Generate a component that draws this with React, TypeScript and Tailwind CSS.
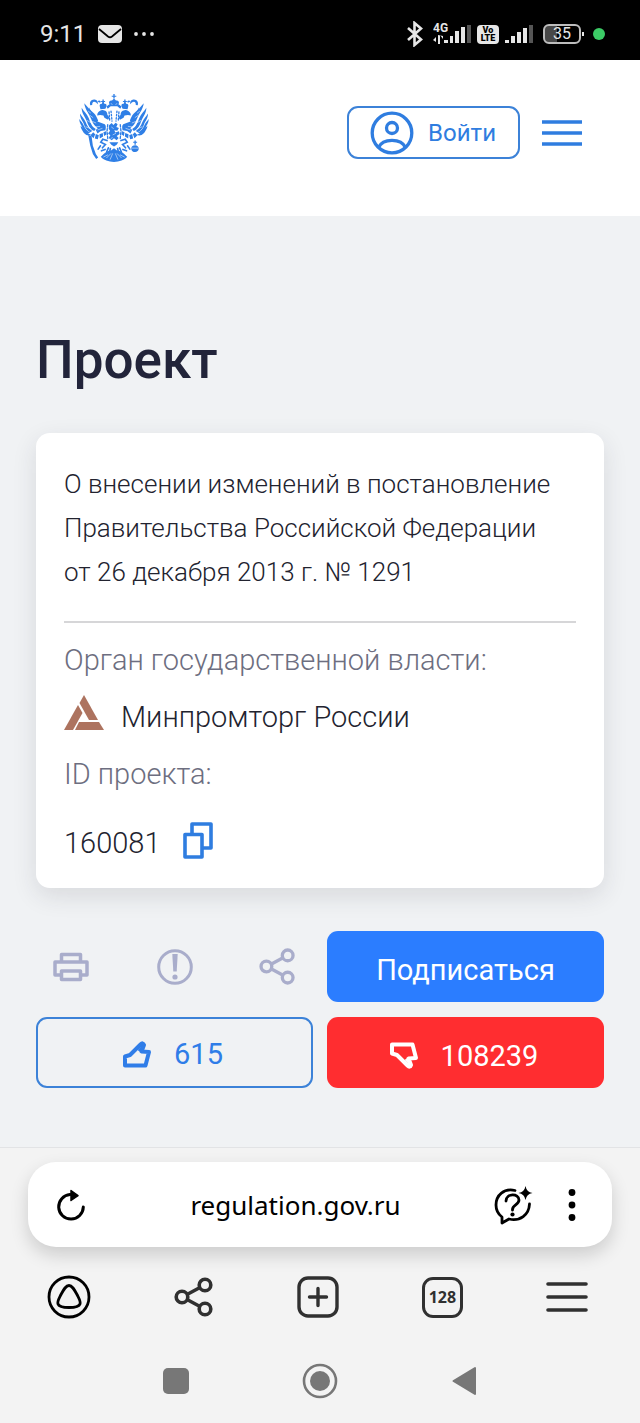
import type { ReactNode } from 'react';

function EagleHalf() {
  return (
    <g>
      {/* wing feathers */}
      <g fill="currentColor">
        <path d="M72 70c8 10 20 22 27 34 8 14 10 27 22 34l-5 9c-15-7-19-20-25-33C85 99 74 88 72 70z" />
        <path d="M64 84c6 10 16 18 21 30 6 14 9 27 22 34l-5 6c-14-6-18-18-23-31-5-12-15-22-15-39z" />
        <path d="M59 101c6 9 13 16 17 26 5 12 9 20 20 27l-6 4c-11-5-16-14-19-24-4-11-12-18-12-33z" />
        <path d="M57 118c5 7 11 12 14 21 4 9 9 15 19 20l-7 3c-10-4-14-10-17-18-3-9-9-13-9-26z" />
        <path d="M61 138c5 5 9 8 13 14 4 7 11 11 20 14l-9 2c-10-2-15-8-18-14-3-6-6-9-6-16z" />
        <path d="M86 82c-1 8 4 16 10 23s9 15 14 22l4-5c-4-8-6-15-12-21-7-7-12-10-16-19z" />
        <path d="M98 109c7 6 12 9 14 16l22 9c4 4 4 10 2 18l-14 2-10 8-5-11 7-7-8-12z" />
        <path d="M91 167l8-9 6 6-5 12zM104 177l3-14 9 4-3 12zM119 177l-1-13 10-4 1 11zM132 169l-2-11 9-4v11z" />
      </g>
      <g fill="none" stroke="white" strokeWidth="1.6">
        <path d="M88 106l11 8M80 122l14 8M76 141l16 6M96 125l12 5M104 142l16-2M112 151l15-5M84 94l8 6" />
      </g>
      {/* head, neck and ribbon */}
      <g fill="currentColor">
        <path d="M112 101c4-7 10-11 18-10 9 1 12 7 12 14l6 8-4 7-11-6-3-7-10-1-9 1z" />
        <path d="M121 88l-2-8c-2-5 2-9 6-8l2-5h4l2 5c5-1 8 3 6 8l-3 7z" />
        <path d="M127 59h4v4h4v3h-4v4h-4v-4h-4v-3h4z" />
        <path d="M90 76c-3-9 3-18 13-17 8 1 11 7 10 14l-5-5c-7-6-13-2-12 7z" />
        <path d="M112 64c5-5 10-2 10 3l-5 1zM139 80c5-4 7-7 12-7v7l-8 7z" />
      </g>
      {/* body scales, leg and claw */}
      <g fill="none" stroke="currentColor" strokeLinecap="round">
        <path d="M147 96l2 27" strokeWidth="4" strokeDasharray="5 5" />
        <path d="M153 94l3 30" strokeWidth="4" strokeDasharray="4 6" />
        <path d="M143 135l-2 19 2 23" strokeWidth="4" strokeDasharray="7 5" />
        <path d="M141 183l-13-4-6 9 14 7-9 10M121 199l-7 10M135 210l-11 4" strokeWidth="5" />
        <path d="M145 205l-5 12M151 207l-3 14" strokeWidth="5" />
      </g>
    </g>
  );
}

function Eagle() {
  return (
    <svg viewBox="56 40 212 210" className="h-[70px] w-[70px] text-[#2f7fe6]" role="img" aria-label="Герб">
      <EagleHalf />
      <g transform="translate(324 0) scale(-1 1)">
        <EagleHalf />
      </g>
      <g fill="currentColor">
        {/* main crown */}
        <path d="M160 42h4v5h5v3h-5v6h-4v-6h-5v-3h5z" />
        <path d="M150 79l-3-10c-1-6 5-9 9-7l6-6 6 6c4-2 10 1 9 7l-3 10z" />
        {/* rider on the shield */}
        <path d="M147 137l8-7 5 6 7-7 6 5-4 8 8 3-5 8-9-1 3 7 11-4 2 8-9 6 6 6-6 7-8-6-7 6-9-7 5-8-7-5 6-9-4-6z" />
        <path d="M148 188h27l-5 8-8 5-8-5z" />
        {/* tail */}
        <path d="M122 232c7-6 16-18 31-19l9-7 9 7c15 1 24 13 31 19-8 10-24 14-40 16-16-2-32-6-40-16z" />
        {/* sceptre */}
        <path d="M84 166l10 3 4 30 9 25 7 10-6 5-10-15-8-26z" />
        {/* orb */}
        <path d="M214 207c1-7 6-10 12-10s11 4 11 10-5 11-11 11-12-4-12-11zM224 183h4v4h4v3h-4v6h-4v-6h-4v-3h4z" />
      </g>
      <g fill="none" stroke="white" strokeWidth="1.6">
        <path d="M153 70l4 5M171 70l-4 5M154 142l7 5M158 166l10-5M152 177l6-3M139 236l14-14M150 241l8-19M174 241l-8-19M185 236l-14-14M130 233l14-7M194 233l-14-7M215 206h21" />
      </g>
    </svg>
  );
}

function StatusBar() {
  return (
    <div className="flex h-[60px] items-center justify-between bg-black pt-2 pr-[35px] pl-10 text-[#e6e6e6]">
      <div className="flex items-center gap-3">
        <span className="text-2xl leading-8">9:11</span>
        <svg viewBox="0 0 24 18" className="h-[18px] w-6">
          <rect width="24" height="18" rx="4" fill="currentColor" />
          <path d="M1 4l9 7.5q2 1.500 4 0L23 4" fill="none" stroke="black" strokeWidth="1.800" />
        </svg>
        <svg viewBox="0 0 20 4" className="h-1 w-5" fill="currentColor">
          <circle cx="2" cy="2" r="1.900" />
          <circle cx="10" cy="2" r="1.900" />
          <circle cx="18" cy="2" r="1.900" />
        </svg>
      </div>
      <div className="flex items-center gap-[6px]">
        <svg viewBox="0 0 16 26" className="mr-1 h-[26px] w-4" fill="none" stroke="currentColor" strokeWidth="2.600">
          <path d="M1 7l13 11.500-6.500 5.500V2L14 7.500 1 19" />
        </svg>
        <svg viewBox="0 0 38 24" className="h-6 w-[38px]" fill="currentColor">
          <text x="0" y="10" fontSize="12" fontWeight="700" fontFamily="Roboto, sans-serif">4G</text>
          <path d="M0 18l3-3v5zM5 13v9h2v-9l3 4v-3zM11 18h4v3h-4zM17 14h3v7h-3zM22 9h4v12h-4zM28 5h4v16h-4z" />
          <path d="M34 3h4v18h-4z" fill="#555" />
        </svg>
        <span className="flex h-[19px] w-[22px] flex-col items-center justify-center rounded bg-[#e6e6e6] text-[9px] leading-[8px] font-black text-black">
          <span>Vo</span>
          <span>LTE</span>
        </span>
        <svg viewBox="0 0 28 20" className="h-5 w-7" fill="currentColor">
          <path d="M0 16h4v3H0zM6 12h4v7H6zM12 8h4v11h-4zM18 4h4v15h-4z" />
          <path d="M24 1h4v18h-4z" fill="#555" />
        </svg>
        <span className="ml-1 flex items-center gap-px">
          <span className="flex h-5 w-[38px] items-center justify-center rounded-md border-2 border-[#bdbdbd] bg-linear-to-r from-[#484848] from-35% to-black to-35% text-base leading-4">35</span>
          <span className="h-1 w-[2px] bg-[#e6e6e6]" />
        </span>
        <span className="ml-[3px] size-3 rounded-full bg-[#3ccb66]" />
      </div>
    </div>
  );
}

function ShareIcon({ className }: { className: string }) {
  return (
    <svg viewBox="0 0 40 40" className={className} fill="none" stroke="currentColor" strokeWidth="3.600">
      <circle cx="8" cy="20" r="5.800" />
      <circle cx="31" cy="8" r="5.800" />
      <circle cx="31" cy="32" r="5.800" />
      <path d="M13 17.500l13-7M13 22.500l13 7" />
    </svg>
  );
}

function Thumb({ className }: { className: string }) {
  return (
    <svg viewBox="0 0 30 30" className={className} fill="none" stroke="currentColor" strokeWidth="4" strokeLinejoin="round">
      <path d="M3 16.500L8 15 18.500 4.500Q21 2 22 5L19.500 11.500 27 12 23.500 25.500H3z" />
      <path d="M17 10l5-5-2 7z" fill="currentColor" strokeWidth="2" />
    </svg>
  );
}

function IconButton({ label, children }: { label: string; children: ReactNode }) {
  return (
    <button type="button" aria-label={label} className="flex items-center justify-center">
      {children}
    </button>
  );
}

function ProjectCard() {
  return (
    <section className="mt-[41px] rounded-[14px] bg-white px-7 pt-[29px] pb-[27px] text-[29px] leading-9 font-light text-[#22232f] shadow-[0_8px_24px_rgba(40,45,60,0.12)]">
      <p className="text-[26px] leading-[44px]">
        О внесении изменений в постановление
        <br />
        Правительства Российской Федерации
        <br />
        от 26 декабря 2013 г. № 1291
      </p>
      <hr className="mt-[27px] border-t-2 border-[#d6d6d8]" />
      <h2 className="mt-[19px] text-[#6d6e80]">Орган государственной власти:</h2>
      <div className="mt-[17px] flex items-start gap-[17px]">
        <svg viewBox="0 0 40 36" className="h-9 w-10 text-[#ad735f]" fill="currentColor">
          <path d="M20 0L34 25H25L15.500 8z" />
          <path d="M14 10L18.500 18 9 35H0z" />
          <path d="M15 27H35L40 35H11z" />
        </svg>
        <span className="pt-1">Минпромторг России</span>
      </div>
      <h2 className="mt-[21px] text-[#6d6e80]">ID проекта:</h2>
      <div className="mt-[30px] flex items-start gap-[22px]">
        <span className="pt-[3px]">160081</span>
        <IconButton label="Скопировать">
          <svg viewBox="0 0 30 37" className="h-[37px] w-[30px] text-[#2f7de0]" fill="none" stroke="currentColor" strokeWidth="3.600" strokeLinejoin="round">
            <path d="M9 12V2h19v24h-9" />
            <path d="M2 12.500h17V35H2z" />
          </svg>
        </IconButton>
      </div>
    </section>
  );
}

function Actions() {
  return (
    <div className="mt-[43px] grid grid-cols-2 gap-x-[14px] gap-y-[15px] text-[29px]">
      <div className="flex items-center justify-between pr-[17px] pl-4 text-[#a9adcb]">
        <IconButton label="Печать">
          <svg viewBox="0 0 38 30" className="h-[30px] w-[38px]" fill="none" stroke="currentColor" strokeWidth="3.500" strokeLinejoin="round">
            <path d="M9.500 10V2.500h19V10M9.500 23H3V10h32v13h-6.500" />
            <path d="M9.500 19h19v8.500h-19z" />
          </svg>
        </IconButton>
        <IconButton label="Сообщить">
          <svg viewBox="0 0 36 36" className="size-9" fill="none" stroke="currentColor" strokeWidth="3">
            <circle cx="18" cy="18" r="16.300" />
            <path d="M15.300 5h5.400l-1 17.500h-3.400z" fill="currentColor" stroke="none" />
            <circle cx="18" cy="28" r="2.600" fill="currentColor" stroke="none" />
          </svg>
        </IconButton>
        <IconButton label="Поделиться">
          <ShareIcon className="size-[37px]" />
        </IconButton>
      </div>
      <button type="button" className="h-[71px] rounded-[11px] bg-[#2b7dff] pt-2 text-white">
        Подписаться
      </button>
      <button type="button" className="flex h-[71px] items-center justify-center gap-[22px] rounded-[11px] border-2 border-[#3c82d8] pt-1 pr-1 text-[#2f7de8]">
        <Thumb className="size-[30px]" />
        <span>615</span>
      </button>
      <button type="button" className="flex h-[71px] items-center justify-center gap-[22px] rounded-[11px] bg-[#ff2d30] pt-1 pr-1 text-white">
        <Thumb className="size-[30px] -scale-y-100" />
        <span className="pt-1">108239</span>
      </button>
    </div>
  );
}

function BrowserBar() {
  return (
    <footer className="border-t border-[#e2e3e5] bg-[#f3f3f3] pt-[14px] text-[#303030]">
      <div className="mx-7 flex h-[85px] items-center justify-between rounded-[28px] bg-white pr-9 pl-7 text-black shadow-[0_8px_18px_rgba(0,0,0,0.16)]">
        <IconButton label="Обновить">
          <svg viewBox="0 0 30 34" className="h-[34px] w-[30px]" fill="none" stroke="currentColor" strokeWidth="3" strokeLinecap="round">
            <path d="M14 6.500A12.300 12.300 0 1 0 27.300 19" />
            <path d="M15 2.500l7 5.200-7 4.800z" fill="currentColor" strokeWidth="1.500" strokeLinejoin="round" />
          </svg>
        </IconButton>
        <a href="https://regulation.gov.ru" className="pl-3 font-['Noto_Sans',sans-serif] text-[26px] leading-9">
          regulation.gov.ru
        </a>
        <div className="flex items-center gap-[35px]">
          <IconButton label="Спросить">
            <svg viewBox="0 0 40 40" className="size-10" fill="none" stroke="currentColor" strokeWidth="2.800" strokeLinecap="round" strokeLinejoin="round">
              <path d="M22 5.500C11 3 3 10 3 20c0 5 2 9 6 12v6l7-4c11 2.500 20-4 20.500-15" />
              <path d="M13 16c0-8 13-8 13-1 0 5-7 5-6.500 10" />
              <circle cx="19.500" cy="29.500" r="2.100" fill="currentColor" stroke="none" />
              <path d="M32.500 1q1 6 7 7-6 1-7 7-1-6-7-7 6-1 7-7z" fill="currentColor" stroke="none" />
            </svg>
          </IconButton>
          <IconButton label="Ещё">
            <svg viewBox="0 0 8 34" className="h-[34px] w-2" fill="currentColor">
              <circle cx="4" cy="4.500" r="3.400" />
              <circle cx="4" cy="17" r="3.400" />
              <circle cx="4" cy="29.500" r="3.400" />
            </svg>
          </IconButton>
        </div>
      </div>
      <nav className="mt-7 grid grid-cols-5 pr-[11px] pl-[7px]">
        <IconButton label="Алиса">
          <svg viewBox="0 0 44 44" className="size-11 text-black" fill="none" stroke="currentColor" strokeWidth="2.800">
            <circle cx="22" cy="22" r="20" />
            <path d="M22 10.500c3 0 5 3.500 8 9 2 4 4 7 3 9.500-1 3-6 3.500-11 3.500s-10-.5-11-3.500c-1-2.500 1-5.500 3-9.500 3-5.500 5-9 8-9z" />
          </svg>
        </IconButton>
        <IconButton label="Поделиться страницей">
          <ShareIcon className="size-10" />
        </IconButton>
        <IconButton label="Новая вкладка">
          <svg viewBox="0 0 42 42" className="size-[42px]" fill="none" stroke="currentColor" strokeWidth="3.400" strokeLinecap="round">
            <rect x="2" y="2" width="38" height="38" rx="9" />
            <path d="M21 12.500v17M12.500 21h17" />
          </svg>
        </IconButton>
        <IconButton label="Вкладки">
          <span className="flex size-[41px] items-center justify-center rounded-[11px] border-[3px] border-current font-['Open_Sans',sans-serif] text-base leading-5 font-bold">
            128
          </span>
        </IconButton>
        <IconButton label="Меню браузера">
          <svg viewBox="0 0 42 32" className="h-8 w-[42px]" stroke="currentColor" strokeWidth="3.600" strokeLinecap="round">
            <path d="M2 3h38M2 16h38M2 29h38" />
          </svg>
        </IconButton>
      </nav>
      <div className="mt-[38px] grid grid-cols-3 px-[104px] pb-[18px] text-[#777]">
        <IconButton label="Недавние">
          <span className="size-[26px] rounded-[5px] bg-current" />
        </IconButton>
        <IconButton label="Домой">
          <svg viewBox="0 0 48 48" className="size-12">
            <circle cx="24" cy="24" r="16" fill="none" stroke="currentColor" strokeWidth="2.600" />
            <circle cx="24" cy="24" r="10" fill="currentColor" />
          </svg>
        </IconButton>
        <IconButton label="Назад">
          <svg viewBox="0 0 24 30" className="h-[30px] w-6" fill="currentColor" stroke="currentColor" strokeWidth="2" strokeLinejoin="round">
            <path d="M1.500 15L23 2v26z" />
          </svg>
        </IconButton>
      </div>
    </footer>
  );
}

export default function App() {
  return (
    <div className="flex flex-col bg-[#f0f2f4] font-[Roboto,sans-serif]">
      <StatusBar />
      <header className="flex h-[156px] items-start justify-between bg-white pt-[33px] pr-[58px] pl-[79px] text-[#2f7de0]">
        <a href="#home">
          <Eagle />
        </a>
        <div className="mt-[13px] flex items-center gap-[22px]">
          <button type="button" className="flex h-[53px] items-center gap-[14px] rounded-[11px] border-2 border-[#3c82d8] pr-[22px] pl-[21px]">
            <svg viewBox="0 0 44 44" className="size-11" fill="none" stroke="currentColor" strokeWidth="3.300">
              <circle cx="22" cy="22" r="19.800" />
              <circle cx="22" cy="17" r="5.500" />
              <path d="M8.500 36.500C13 27 31 27 35.500 36.500" />
            </svg>
            <span className="text-2xl leading-8">Войти</span>
          </button>
          <IconButton label="Меню">
            <svg viewBox="0 0 40 26" className="h-[26px] w-10" stroke="currentColor" strokeWidth="3.600">
              <path d="M0 2h40M0 13h40M0 24h40" />
            </svg>
          </IconButton>
        </div>
      </header>
      <main className="px-9 pt-[112px] pb-[59px]">
        <h1 className="text-[53px] leading-16 font-medium text-[#22243a]">Проект</h1>
        <ProjectCard />
        <Actions />
      </main>
      <BrowserBar />
    </div>
  );
}
